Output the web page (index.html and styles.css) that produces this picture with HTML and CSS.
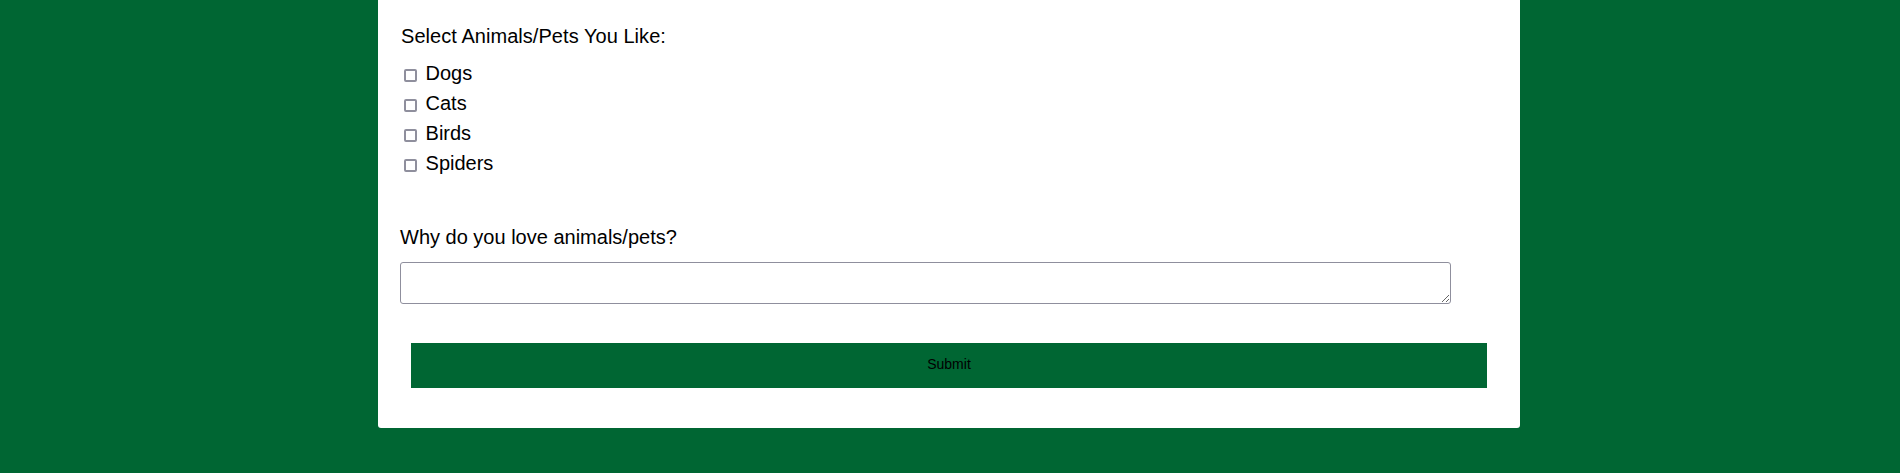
FILE: index.html
```html
<!DOCTYPE html>
<html lang="en">
<head>
<meta charset="utf-8">
<title>Animals Survey</title>
<link rel="stylesheet" href="styles.css">
</head>
<body>
<main class="card">
  <form class="survey">
    <p class="question">Select Animals/Pets You Like:</p>
    <div class="options">
      <label class="option"><input type="checkbox" name="pets" value="dogs"> Dogs</label>
      <label class="option"><input type="checkbox" name="pets" value="cats"> Cats</label>
      <label class="option"><input type="checkbox" name="pets" value="birds"> Birds</label>
      <label class="option"><input type="checkbox" name="pets" value="spiders"> Spiders</label>
    </div>
    <label class="question why" for="why">Why do you love animals/pets?</label>
    <textarea id="why" class="answer"></textarea>
    <button type="submit" class="submit">Submit</button>
  </form>
</main>
</body>
</html>
```
FILE: styles.css
```css
html, body {
  margin: 0;
  padding: 0;
}
body {
  background: #006633;
  height: 473px;
  overflow: hidden;
  font-family: "Liberation Sans", Arial, sans-serif;
  color: #000;
}
.card {
  width: 1142px;
  margin-left: 378px;
  background: #fff;
  border-radius: 0 0 3px 3px;
  box-sizing: border-box;
  padding: 25px 0 40px 22px;
}
.survey {
  display: flex;
  flex-direction: column;
  align-items: flex-start;
}
.question {
  margin: 0;
  font-size: 20px;
  line-height: 23px;
  padding-left: 1px;
  letter-spacing: 0.05px;
}
.options {
  margin-top: 10px;
  display: flex;
  flex-direction: column;
}
.option {
  font-size: 20px;
  line-height: 30px;
}
.option input {
  -webkit-appearance: none;
  appearance: none;
  width: 13px;
  height: 13px;
  box-sizing: border-box;
  border: 2px solid #8f8f9d;
  border-radius: 2px;
  background: #fff;
  vertical-align: middle;
  margin: 5px 3px 3px 4px;
}
.why {
  margin-top: 48px;
  padding-left: 0;
  letter-spacing: 0;
}
.answer {
  margin-top: 13px;
  width: 1051px;
  height: 42px;
  box-sizing: border-box;
  border: 1px solid #8f8f9d;
  border-radius: 3px;
  display: block;
}
.submit {
  margin-top: 39px;
  margin-left: 11px;
  width: 1076px;
  height: 45px;
  padding: 0 0 3px;
  background: #006633;
  border: none;
  color: #000;
  font-family: "Liberation Sans", Arial, sans-serif;
  font-size: 14px;
  cursor: pointer;
}
```
